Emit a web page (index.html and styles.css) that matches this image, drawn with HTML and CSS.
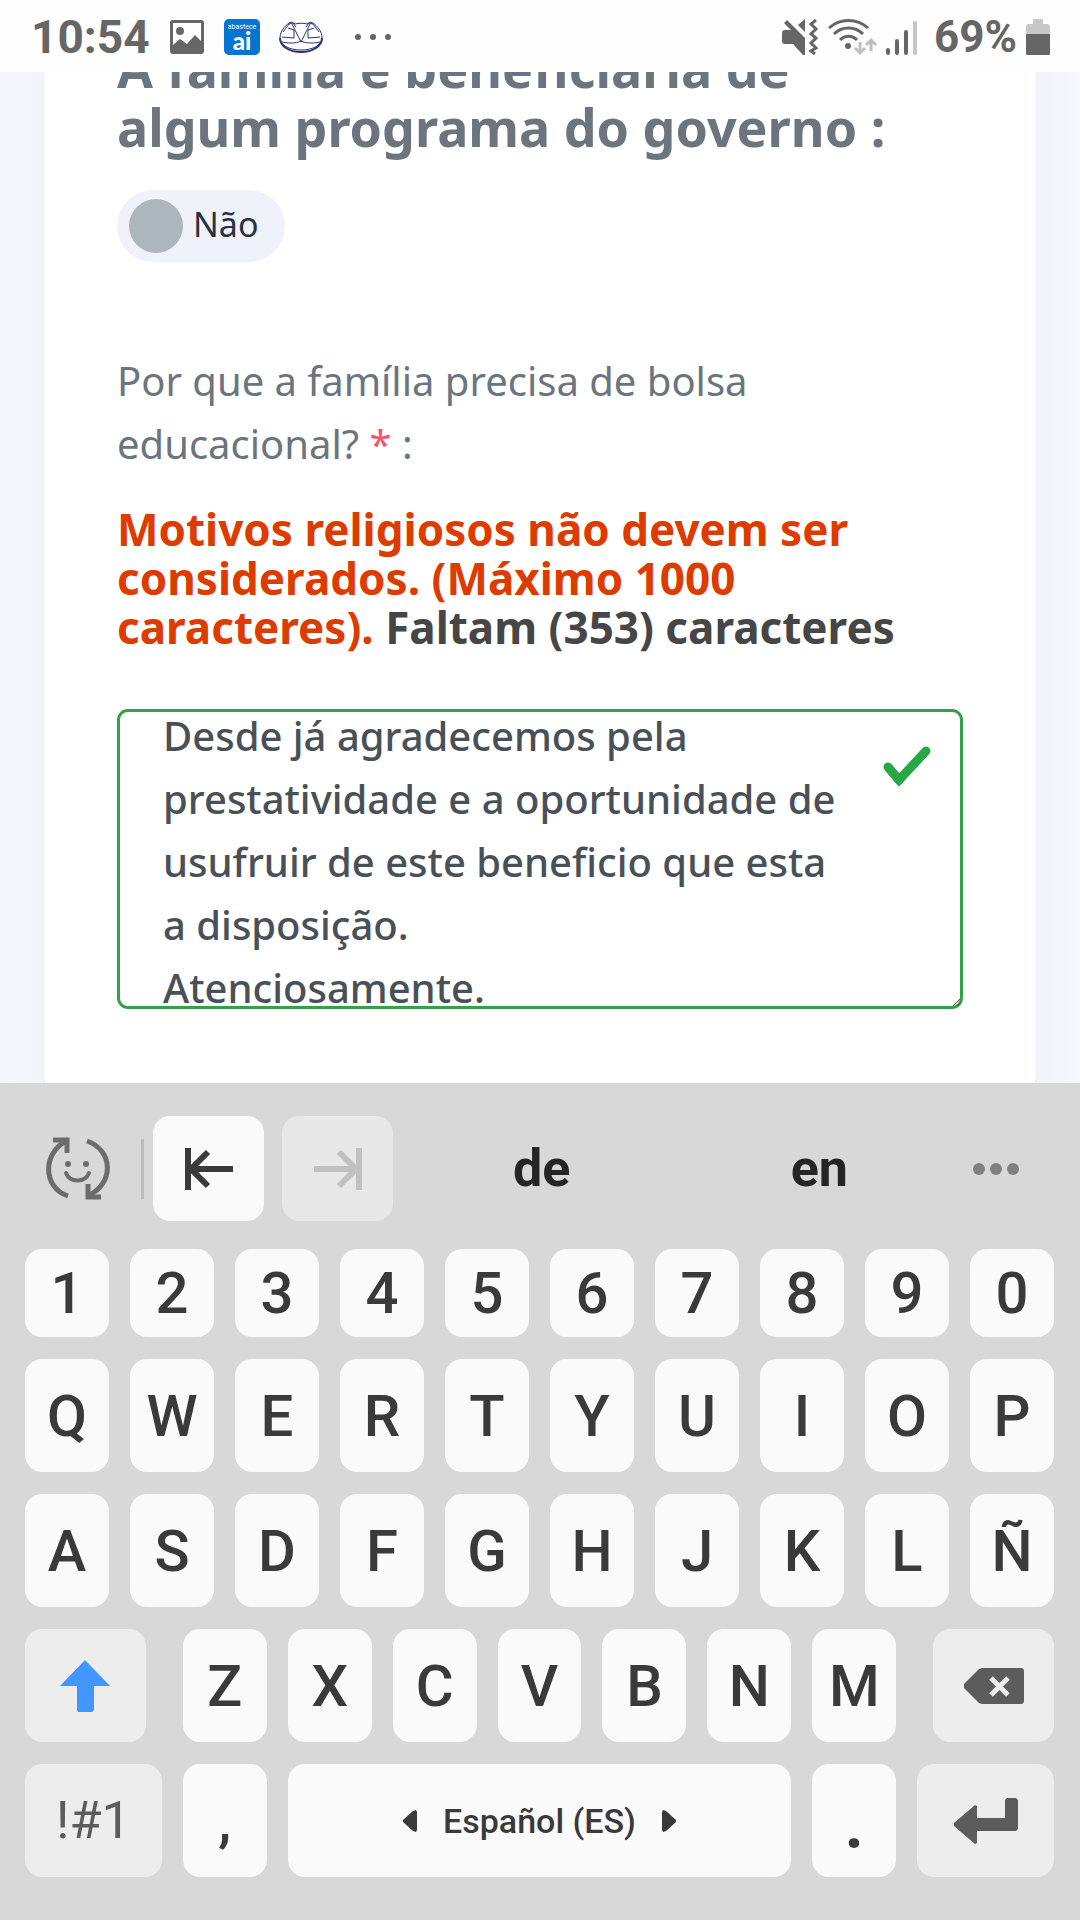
FILE: index.html
```html
<!DOCTYPE html>
<html lang="pt-BR">
<head>
  <meta charset="utf-8">
  <meta name="viewport" content="width=device-width, initial-scale=1">
  <title>Bolsa educacional</title>
  <link rel="stylesheet" href="styles.css">
</head>
<body>
  <header class="status-bar">
    <div class="status-left">
      <span class="time">10:54</span>
      <svg class="status-icon" width="36" height="36" viewBox="0 0 36 36">
        <path fill="#666" fill-rule="evenodd" d="M4 1h28a3 3 0 0 1 3 3v28a3 3 0 0 1-3 3H4a3 3 0 0 1-3-3V4a3 3 0 0 1 3-3zM4 4v22l7-6 7 5 8-9 6 6V4zM11 8a4 4 0 1 1 0 8 4 4 0 0 1 0-8z"/>
      </svg>
      <svg class="status-icon" width="36" height="36" viewBox="0 0 36 36">
        <rect x="0" y="0" width="36" height="36" rx="5" fill="#0674d1"/>
        <text class="app-top" x="18" y="10" text-anchor="middle">abastece</text>
        <text class="app-name" x="18" y="31" text-anchor="middle">ai</text>
      </svg>
      <svg class="status-icon" width="44" height="34" viewBox="0 0 44 34" fill="none" stroke="#2d3277" stroke-width="1">
        <path stroke-width="2" d="M1 18c0 8 9 14 21 14s21-6 21-14"/>
        <path d="M1 18C1 11 6 6 10 3l3-1 3 2c4-1 8-1 12 0l3-2 3 1c4 3 9 8 9 15 0 7-9 12-21 12S1 25 1 18z"/>
        <path d="M13 4L22 22L31 4M10 4L4 12M34 4l6 8M9 8l6 2v8L3 17M35 8l-6 2v8l12-1M3 22c4 1 14 2 19-1 5 3 15 2 19 1M10 4l4-1 3 4M34 4l-4-1-3 4"/>
      </svg>
      <svg width="38" height="8" viewBox="0 0 38 8" fill="#666">
        <circle cx="4" cy="4" r="3"/><circle cx="19" cy="4" r="3"/><circle cx="34" cy="4" r="3"/>
      </svg>
    </div>
    <div class="status-right">
      <svg width="37" height="36" viewBox="0 0 37 36">
        <path fill="#666" d="M3 11h6L2 4l3-3 18 18v17h-2L11 25H3a3 3 0 0 1-3-3v-8a3 3 0 0 1 3-3zM23 0v13l-7-7z"/>
        <path fill="none" stroke="#666" stroke-width="3" d="M34 1l-5 4 5 5-5 5 5 4-5 5 5 5-5 3 4 3"/>
      </svg>
      <svg width="49" height="36" viewBox="0 0 49 36">
        <g fill="none" stroke="#666" stroke-width="3">
          <path d="M1 9C12-1 29-1 40 9M6 15c8-8 21-8 29 0M12 21c5-5 12-5 17 0"/>
        </g>
        <circle cx="20" cy="27" r="3" fill="#666"/>
        <path fill="none" stroke="#bfbfbf" stroke-width="3" d="M32 23v10M27 29l5 5 5-5M43 32V21M38 26l5-5 5 5"/>
      </svg>
      <svg width="31" height="36" viewBox="0 0 31 36" stroke="#666" stroke-width="4" stroke-linecap="round">
        <path d="M2 31v3M11 22v12M20 13v21"/><path stroke="#c6c6c6" d="M29 4v30"/>
      </svg>
      <span class="battery-level">69%</span>
      <svg width="24" height="36" viewBox="0 0 24 36">
        <path fill="#c8c8c8" d="M7 0h10v5h5l2 2v9H0V7l2-2h5z"/><path fill="#666" d="M0 15h24v20l-1 1H1l-1-1z"/>
      </svg>
    </div>
  </header>

  <main class="page">
    <form class="card">
      <h2 class="question">A família é beneficiária de<br>algum programa do governo :</h2>
      <label class="switch">
        <input type="checkbox" name="programa">
        <span>Não</span>
      </label>
      <label class="field-label" for="motivo">Por que a família precisa de bolsa<br>educacional? <span class="required">*</span> :</label>
      <p class="notice">Motivos religiosos não devem ser<br>considerados. (Máximo 1000<br>caracteres). <span>Faltam (353) caracteres</span></p>
      <div class="field">
        <textarea id="motivo" name="motivo" maxlength="1000" spellcheck="false">Desde já agradecemos pela prestatividade e a oportunidade de usufruir de este beneficio que esta a disposição.
Atenciosamente.</textarea>
        <svg class="check" width="48" height="40" viewBox="0 0 48 40" fill="none" stroke="#28a745" stroke-width="9">
          <path stroke-linecap="round" d="M5 21L16 34L43 5"/><path fill="#28a745" stroke="none" d="M10 34l6 6 6-6z"/>
        </svg>
        <svg class="grip" width="7" height="7" viewBox="0 0 7 7" stroke="#444"><path d="M0 7l7-7M4 7l3-3"/></svg>
      </div>
    </form>
  </main>

  <section class="keyboard">
    <div class="toolbar">
      <button class="tool" aria-label="Emoji">
        <svg width="64" height="64" viewBox="0 0 64 64" fill="none" stroke="#6c6c6c" stroke-width="5">
          <path d="M41 4C67 13 69 46 42 59M22 59C-4 50-3 16 20 4"/>
          <path d="M7 3h14v13M55 60H42V47"/>
          <path d="M20 36c4 10 19 10 23 0" stroke-width="4" stroke-linecap="round"/>
          <circle cx="22" cy="27" r="3" fill="#6c6c6c" stroke="none"/><circle cx="40" cy="27" r="3" fill="#6c6c6c" stroke="none"/>
        </svg>
      </button>
      <span class="divider"></span>
      <button class="nav" aria-label="Anterior">
        <svg width="48" height="42" viewBox="0 0 48 42" fill="none" stroke="#3a3a3a" stroke-width="6">
          <path d="M3 0v42M48 21H7M23 4L6 21l17 17"/>
        </svg>
      </button>
      <button class="nav" aria-label="Próximo" disabled>
        <svg width="48" height="42" viewBox="0 0 48 42" fill="none" stroke="#c1c1c1" stroke-width="6">
          <path d="M45 0v42M0 21h41M25 4l17 17-17 17"/>
        </svg>
      </button>
      <div class="suggestions">
        <button>de</button>
        <button>en</button>
      </div>
      <button class="more" aria-label="Mais">
        <svg width="46" height="12" viewBox="0 0 46 12" fill="#808080">
          <circle cx="6" cy="6" r="6"/><circle cx="23" cy="6" r="6"/><circle cx="40" cy="6" r="6"/>
        </svg>
      </button>
    </div>

    <div class="row numbers">
      <button>1</button><button>2</button><button>3</button><button>4</button><button>5</button>
      <button>6</button><button>7</button><button>8</button><button>9</button><button>0</button>
    </div>
    <div class="row">
      <button>Q</button><button>W</button><button>E</button><button>R</button><button>T</button>
      <button>Y</button><button>U</button><button>I</button><button>O</button><button>P</button>
    </div>
    <div class="row">
      <button>A</button><button>S</button><button>D</button><button>F</button><button>G</button>
      <button>H</button><button>J</button><button>K</button><button>L</button><button>Ñ</button>
    </div>
    <div class="row">
      <button class="mod shift" aria-label="Shift">
        <svg width="50" height="54" viewBox="0 0 50 54"><path fill="#4297ff" d="M25 1l25 26H34v24l-2 2H18l-1-2V27H0z"/></svg>
      </button>
      <button>Z</button><button>X</button><button>C</button><button>V</button>
      <button>B</button><button>N</button><button>M</button>
      <button class="mod delete" aria-label="Apagar">
        <svg width="60" height="36" viewBox="0 0 60 36">
          <path fill="#5c5c5c" d="M18 0h40l2 2v32l-2 2H18l-3-1L0 20v-4L15 1z"/>
          <path fill="none" stroke="#ededed" stroke-width="5" d="M27 10l17 17M44 10L27 27"/>
        </svg>
      </button>
    </div>
    <div class="row">
      <button class="mod symbols">!#1</button>
      <button>,</button>
      <button class="space">
        <svg width="14" height="22" viewBox="0 0 14 22" fill="#3a3a3a"><path d="M10 1l3-1 1 2v18l-1 2-3-1-10-9v-2z"/></svg>
        <span>Español (ES)</span>
        <svg width="14" height="22" viewBox="0 0 14 22" fill="#3a3a3a"><path d="M4 1L1 0 0 2v18l1 2 3-1 10-9v-2z"/></svg>
      </button>
      <button class="period">.</button>
      <button class="mod symbols" aria-label="Enter">
        <svg width="64" height="46" viewBox="0 0 64 46">
          <path fill="#5c5c5c" d="M53 0h9l2 2v29l-2 2H23v12l-2 1L0 28v-3L21 7l2 1v12h28V2z"/>
        </svg>
      </button>
    </div>
  </section>
<script>
  document.getElementById("motivo").scrollTop = 28;
</script>
</body>
</html>
```
FILE: styles.css
```css
* {
  box-sizing: border-box;
}
body {
  margin: 0;
  height: 100vh;
  display: flex;
  flex-direction: column;
  overflow: hidden;
  background: #fefefe;
  font-family: "Noto Sans", sans-serif;
}
svg {
  display: block;
  flex: none;
}
button {
  margin: 0;
  padding: 0;
  border: 0;
  background: none;
  font-family: Roboto, sans-serif;
  color: #3a3a3a;
}

/* status bar */
.status-bar {
  flex: none;
  height: 72px;
  padding: 2px 30px 0 31px;
  display: flex;
  align-items: center;
  justify-content: space-between;
  font-family: Roboto, sans-serif;
  color: #666;
}
.status-left {
  display: flex;
  align-items: center;
  gap: 19px;
}
.status-left svg:last-child {
  margin-left: 12px;
}
.status-right {
  display: flex;
  align-items: center;
  gap: 9px;
}
.time, .battery-level {
  font-size: 46px;
  line-height: 54px;
  font-weight: 700;
}
.battery-level {
  margin-left: 8px;
  font-size: 44px;
}
.app-top {
  font: 7px Roboto, sans-serif;
  fill: #fff;
}
.app-name {
  font: 900 24px Lato, sans-serif;
  fill: #fff;
}

/* form */
.page {
  flex: 1;
  min-height: 0;
  overflow: hidden;
  padding: 0 45px;
  display: flex;
  flex-direction: column;
  justify-content: flex-end;
  background: linear-gradient(to right, #f7f8fc, #f2f4f8 45px, #f2f4f8 calc(100% - 45px), #f7f8fc);
}
.card {
  padding: 0 72px 74px;
  display: flex;
  flex-direction: column;
  align-items: flex-start;
  background: #fff;
}
.question {
  margin: 0 0 34px;
  font-size: 52px;
  line-height: 59px;
  font-weight: 700;
  color: #6c757d;
}
.switch {
  height: 72px;
  margin-bottom: 87px;
  padding: 0 27px 0 12px;
  display: flex;
  align-items: center;
  gap: 10px;
  border-radius: 36px;
  background: #eff2fb;
  font-size: 34px;
  color: #2a3142;
}
.switch input {
  appearance: none;
  width: 54px;
  height: 54px;
  margin: 0;
  border-radius: 50%;
  background: #adb5bd;
}
.switch span {
  padding-bottom: 4px;
}
.field-label {
  margin-bottom: 30px;
  font-size: 40px;
  line-height: 63px;
  color: #6c757d;
}
.required {
  color: #f1556c;
}
.notice {
  margin: 0 0 57px;
  font-size: 44px;
  line-height: 49px;
  font-weight: 700;
  color: #dd3c00;
}
.notice span {
  color: #464646;
}
.field {
  position: relative;
  width: 100%;
}
.field textarea {
  display: block;
  width: 100%;
  height: 300px;
  padding: 20px 110px 20px 43px;
  border: 3px solid #35a04c;
  border-radius: 11px;
  outline: 0;
  resize: none;
  overflow: hidden;
  background: #fff;
  font-family: inherit;
  font-size: 40px;
  line-height: 63px;
  font-weight: 500;
  color: #495057;
}
.check {
  position: absolute;
  top: 37px;
  right: 32px;
}
.grip {
  position: absolute;
  right: 3px;
  bottom: 3px;
}

/* keyboard */
.keyboard {
  flex: none;
  padding: 33px 26px 43px 25px;
  display: flex;
  flex-direction: column;
  gap: 22px;
  background: #d8d8d8;
}
.toolbar {
  height: 105px;
  margin-bottom: 6px;
  padding: 0 20px 0 21px;
  display: flex;
  align-items: center;
}
.divider {
  width: 3px;
  height: 60px;
  margin: 0 9px 0 31px;
  background: #bcbcbc;
}
.nav {
  width: 111px;
  height: 105px;
  margin-right: 18px;
  display: flex;
  align-items: center;
  justify-content: center;
  border-radius: 17px;
  background: #fafafa;
}
.nav:disabled {
  margin-right: 10px;
  background: #e8e8e8;
}
.suggestions {
  flex: 1;
  display: flex;
}
.suggestions button {
  flex: 1;
  font-size: 52px;
  font-weight: 700;
  color: #252525;
}
.more {
  width: 76px;
  display: flex;
  justify-content: center;
}
.row {
  height: 113px;
  display: flex;
  gap: 21px;
}
.numbers {
  height: 88px;
}
.row button {
  flex: 84 1 0;
  display: flex;
  align-items: center;
  justify-content: center;
  border-radius: 17px;
  background: #fafafa;
  font-size: 58px;
  font-weight: 500;
}
.row .mod {
  background: #ededed;
}
.row .shift {
  flex-grow: 121;
  margin-right: 16px;
}
.row .delete {
  flex-grow: 121;
  margin-left: 16px;
}
.row .symbols {
  flex-grow: 137;
  font-size: 52px;
  font-weight: 400;
  color: #5c5c5c;
}
.row .space {
  flex-grow: 504;
  gap: 26px;
  font-size: 34px;
}
.row .period {
  font-size: 76px;
}
```
